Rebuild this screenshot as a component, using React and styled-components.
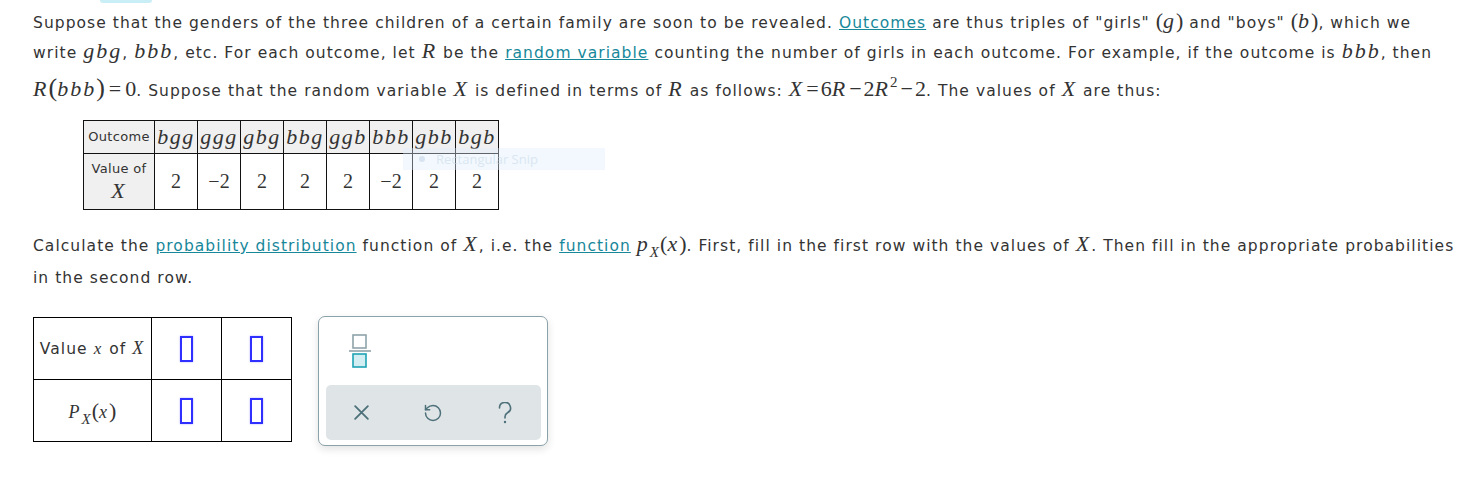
import React from "react";
import styled, { createGlobalStyle } from "styled-components";
import { RotateCcw } from "lucide-react";

const GlobalStyle = createGlobalStyle`
  body {
    margin: 0;
    background: #fff;
  }
`;

const Page = styled.div`
  position: relative;
  padding: 0 0 40px 33px;
  font-family: "DejaVu Sans", Verdana, sans-serif;
  font-size: 15.5px;
  letter-spacing: 1.05px;
  color: #333;
`;

const TopTab = styled.div`
  width: 52px;
  height: 3px;
  margin-left: 67px;
  background: #c9eef6;
  border-radius: 0 0 6px 6px;
`;

const Intro = styled.div`
  margin-top: 3px;
`;

const Line = styled.div`
  line-height: ${props => props.$h || 30}px;
  height: ${props => props.$h || 30}px;
  white-space: nowrap;
`;

const Link = styled.a`
  color: #17879a;
  text-decoration: underline;
  cursor: pointer;
`;

const M = styled.span`
  font-family: "Liberation Serif", "Times New Roman", serif;
  font-style: ${props => (props.$n ? "normal" : "italic")};
  font-size: ${props => props.$s || 22}px;
  letter-spacing: ${props => (props.$n ? 0 : 2)}px;
  margin: ${props => props.$m || 0};
`;

const Sup = styled.sup`
  font-family: "Liberation Serif", "Times New Roman", serif;
  font-size: 15px;
  vertical-align: 9px;
  line-height: 0;
`;

const Sub = styled.sub`
  font-family: "Liberation Serif", "Times New Roman", serif;
  font-style: italic;
  font-size: 15px;
  vertical-align: -6px;
  line-height: 0;
`;

const OutcomeTable = styled.table`
  border-collapse: collapse;
  margin: 10px 0 0 50px;
  table-layout: fixed;
`;

const Cell = styled.td`
  border: 1px solid #111;
  background: ${props => (props.$shade ? "#f0f0f0" : "#fff")};
  width: ${props => props.$w || 42}px;
  height: ${props => props.$h}px;
  padding: 0;
  text-align: center;
  white-space: nowrap;
  letter-spacing: 0;
`;

const OutcomeText = styled(M)`
  letter-spacing: 1.5px;
`;

const SmallLabel = styled.div`
  font-size: 13px;
  letter-spacing: 0.3px;
  line-height: 18px;
`;

const Task = styled.div`
  margin-top: 19px;
`;

const AnswerRow = styled.div`
  display: flex;
  align-items: flex-start;
  gap: 26px;
  margin-top: 19px;
`;

const AnswerTable = styled.table`
  border-collapse: collapse;
  margin-top: 1px;
  table-layout: fixed;
`;

const ACell = styled.td`
  border: 1px solid #000;
  width: ${props => props.$w || 69}px;
  height: ${props => props.$h}px;
  padding: 0;
  text-align: center;
  vertical-align: middle;
  white-space: nowrap;
`;

const InputBox = styled.span`
  display: inline-block;
  box-sizing: border-box;
  width: 13px;
  height: 26px;
  border: 2px solid #2f2fff;
  box-shadow: 0 0 2px rgba(90, 90, 255, 0.45);
  vertical-align: middle;
`;

const Keypad = styled.div`
  box-sizing: border-box;
  width: 230px;
  height: 130px;
  border: 1px solid #8aa2a9;
  border-radius: 7px;
  box-shadow: 0 3px 8px rgba(0, 0, 0, 0.12);
  background: #fff;
  display: flex;
  flex-direction: column;
`;

const FracArea = styled.div`
  height: 68px;
  box-sizing: border-box;
  padding: 17px 0 0 30px;
`;

const ToolBar = styled.div`
  height: 55px;
  margin: 0 6px 0 7px;
  border-radius: 5px;
  background: #dfe5e7;
  display: grid;
  grid-template-columns: repeat(3, 1fr);
  align-items: center;
  justify-items: center;
`;

const ToolButton = styled.div`
  display: flex;
  align-items: center;
  justify-content: center;
  width: 24px;
  height: 24px;
  color: #4e707a;
`;

const Snip = styled.div`
  position: absolute;
  left: 403px;
  top: 148px;
  width: 202px;
  height: 22px;
  background: rgba(222, 236, 250, 0.38);
  display: flex;
  align-items: center;
  gap: 11px;
  padding-left: 16px;
  box-sizing: border-box;
  font-family: "Open Sans", sans-serif;
  font-size: 13px;
  letter-spacing: 0;
  color: rgba(196, 214, 232, 0.55);
`;

const SnipDot = styled.span`
  width: 6px;
  height: 6px;
  border-radius: 50%;
  background: rgba(196, 214, 232, 0.6);
`;

const outcomes = ["bgg", "ggg", "gbg", "bbg", "ggb", "bbb", "gbb", "bgb"];
const values = ["2", "−2", "2", "2", "2", "−2", "2", "2"];

const FractionIcon = () => (
  <svg width="22" height="34" viewBox="0 0 22 34">
    <rect x="4" y="1" width="13" height="13" fill="#fff" stroke="#8ea4aa" strokeWidth="1.6" />
    <line x1="0" y1="17" x2="22" y2="17" stroke="#8ea4aa" strokeWidth="1.6" />
    <rect x="4" y="20" width="13" height="13" fill="#d3eef3" stroke="#1ea3b5" strokeWidth="1.6" />
  </svg>
);

const CloseIcon = () => (
  <svg width="17" height="17" viewBox="0 0 16 16">
    <path d="M2 2 L14 14 M14 2 L2 14" stroke="currentColor" strokeWidth="1.7" strokeLinecap="round" />
  </svg>
);

const HelpIcon = () => (
  <svg width="16" height="22" viewBox="0 0 16 22">
    <path
      d="M2.5 6 A5.5 5.5 0 1 1 10.5 10.8 C8.6 11.9 8 13 8 14.8 V16"
      fill="none"
      stroke="currentColor"
      strokeWidth="1.6"
      strokeLinecap="round"
    />
    <circle cx="8" cy="20" r="1.2" fill="currentColor" />
  </svg>
);

export default function App() {
  return (
    <Page>
      <GlobalStyle />
      <TopTab />
      <Intro>
        <Line>
          Suppose that the genders of the three children of a certain family are soon to be revealed.{" "}
          <Link>Outcomes</Link> are thus triples of "girls" <M $n>(</M><M>g</M><M $n>)</M> and "boys"{" "}
          <M $n>(</M><M>b</M><M $n>)</M>, which we
        </Line>
        <Line>
          write <M>gbg</M>, <M>bbb</M>, etc. For each outcome, let <M>R</M> be the{" "}
          <Link>random variable</Link> counting the number of girls in each outcome. For example, if the
          outcome is <M>bbb</M>, then
        </Line>
        <Line $h={44}>
          <M>R</M><M $n $s={26}>(</M><M>bbb</M><M $n $s={26}>)</M><M $n $m="0 4px">=</M><M $n>0</M>. Suppose
          that the random variable <M>X</M> is defined in terms of <M>R</M> as follows: <M>X</M>
          <M $n $m="0 2px">=</M><M $n>6</M><M>R</M><M $n $m="0 2px">−</M><M $n>2</M><M>R</M><Sup>2</Sup>
          <M $n $m="0 2px">−</M><M $n>2</M>. The values of <M>X</M> are thus:
        </Line>
      </Intro>

      <OutcomeTable>
        <tbody>
          <tr>
            <Cell $shade $w={70} $h={32}>
              <SmallLabel>Outcome</SmallLabel>
            </Cell>
            {outcomes.map(o => (
              <Cell key={o} $shade $h={32}>
                <OutcomeText>{o}</OutcomeText>
              </Cell>
            ))}
          </tr>
          <tr>
            <Cell $shade $w={70} $h={55}>
              <SmallLabel>Value of</SmallLabel>
              <M $s={22}>X</M>
            </Cell>
            {values.map((v, i) => (
              <Cell key={i} $h={55}>
                <M $n $s={20}>{v}</M>
              </Cell>
            ))}
          </tr>
        </tbody>
      </OutcomeTable>

      <Task>
        <Line>
          Calculate the <Link>probability distribution</Link> function of <M>X</M>, i.e. the{" "}
          <Link>function</Link> <M>p</M><Sub>X</Sub><M $n>(</M><M>x</M><M $n>)</M>. First, fill in the first
          row with the values of <M>X</M>. Then fill in the appropriate probabilities
        </Line>
        <Line $h={38}>in the second row.</Line>
      </Task>

      <AnswerRow>
        <AnswerTable>
          <tbody>
            <tr>
              <ACell $w={117} $h={61}>
                Value <M $s={17}>x</M> of <M $s={18}>X</M>
              </ACell>
              <ACell>
                <InputBox />
              </ACell>
              <ACell>
                <InputBox />
              </ACell>
            </tr>
            <tr>
              <ACell $w={117} $h={61}>
                <M $s={18}>P</M>
                <Sub>X</Sub>
                <M $n $s={22}>(</M>
                <M $s={18}>x</M>
                <M $n $s={22}>)</M>
              </ACell>
              <ACell>
                <InputBox />
              </ACell>
              <ACell>
                <InputBox />
              </ACell>
            </tr>
          </tbody>
        </AnswerTable>

        <Keypad>
          <FracArea>
            <FractionIcon />
          </FracArea>
          <ToolBar>
            <ToolButton>
              <CloseIcon />
            </ToolButton>
            <ToolButton>
              <RotateCcw size={20} strokeWidth={1.8} />
            </ToolButton>
            <ToolButton>
              <HelpIcon />
            </ToolButton>
          </ToolBar>
        </Keypad>
      </AnswerRow>

      <Snip>
        <SnipDot />
        Rectangular Snip
      </Snip>
    </Page>
  );
}
